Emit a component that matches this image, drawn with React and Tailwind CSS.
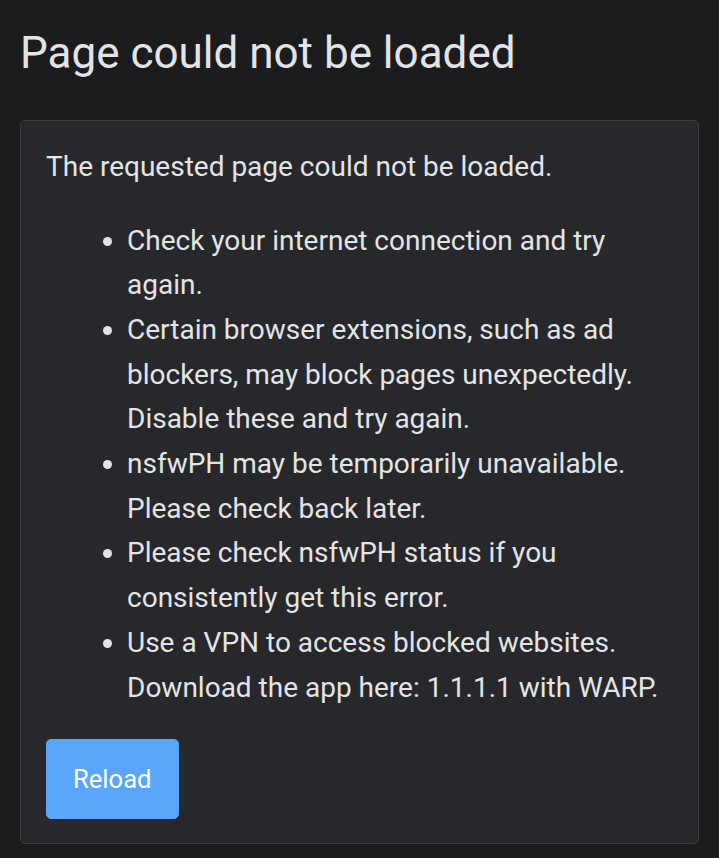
import React from 'react';

const tips = [
    'Check your internet connection and try again.',
    'Certain browser extensions, such as ad blockers, may block pages unexpectedly. Disable these and try again.',
    'nsfwPH may be temporarily unavailable. Please check back later.',
    'Please check nsfwPH status if you consistently get this error.',
    'Use a VPN to access blocked websites. Download the app here: 1.1.1.1 with WARP.',
];

const App = () => {
    return (
        <div
            className="min-h-screen bg-[#1b1c1e] px-[20px] pt-[27px] pb-[14px] text-[#e3e4e6]"
            style={{ fontFamily: 'Roboto, "Noto Sans", sans-serif' }}
        >
            <h1 className="text-[44px] leading-[1.2] font-normal mb-[40px]">Page could not be loaded</h1>

            {/* Error card */}
            <div className="bg-[#26282b] border border-[#3b3d40] rounded-[5px] px-[25px] py-[24px] text-[28px] leading-[44.7px]">
                <p className="mb-[29px]">The requested page could not be loaded.</p>
                <ul className="list-disc pl-[81px] mb-[29px]">
                    {tips.map((tip) => (
                        <li key={tip}>{tip}</li>
                    ))}
                </ul>
                <button className="bg-[#5aa6fb] text-white rounded-[5px] px-[26px] h-[80px] text-[25.6px] leading-[38px] border border-[#5aa6fb]">
                    Reload
                </button>
            </div>
        </div>
    );
};

export default App;
